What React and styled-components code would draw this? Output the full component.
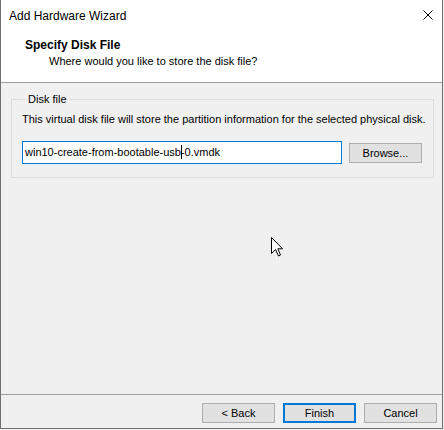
import React from 'react'
import styled, { createGlobalStyle } from 'styled-components'

const GlobalStyle = createGlobalStyle`
    html, body {
        margin: 0;
        padding: 0;
        background: #f0f0f0;
    }
    body {
        font-family: "Liberation Sans", Arial, sans-serif;
        font-size: 11px;
        color: #000;
    }
`

export default function App() {
    return (
        <>
        <GlobalStyle />
        <Window>
            <TitleBar>
                <Title>Add Hardware Wizard</Title>
                <CloseBtn>
                    <svg width="10" height="10" viewBox="0 0 10 10">
                        <path d="M0.5 0.5 L9.5 9.5 M9.5 0.5 L0.5 9.5" stroke="#000" strokeWidth="1" fill="none" />
                    </svg>
                </CloseBtn>
            </TitleBar>
            <Header>
                <HeaderTitle>Specify Disk File</HeaderTitle>
                <HeaderSub>Where would you like to store the disk file?</HeaderSub>
            </Header>
            <Body>
                <GroupBox>
                    <Legend>Disk file</Legend>
                    <Description>This virtual disk file will store the partition information for the selected physical disk.</Description>
                    <FileRow>
                        <FileInput>
                            win10-create-from-bootable-usb<Caret />-0.vmdk
                        </FileInput>
                        <Button>Browse...</Button>
                    </FileRow>
                </GroupBox>
                <Pointer>
                    <svg width="13" height="20" viewBox="0 0 13 20">
                        <path d="M0.5 0.5 L0.5 16.5 L4.5 12.5 L7.5 19 L9.5 18 L6.8 11.8 L11.5 11.8 Z" fill="#fff" stroke="#000" strokeWidth="1" strokeLinejoin="miter" />
                    </svg>
                </Pointer>
            </Body>
            <Footer>
                <Button>&lt; Back</Button>
                <Button focused>Finish</Button>
                <Button>Cancel</Button>
            </Footer>
        </Window>
        </>
    )
}

const Window = styled.div`
    width: 443px;
    height: 429px;
    box-sizing: border-box;
    border: 1px solid #707070;
    border-top: none;
    display: flex;
    flex-direction: column;
    background: #fff;
`

const TitleBar = styled.div`
    height: 31px;
    display: flex;
    align-items: center;
    justify-content: space-between;
    padding-left: 8px;
    padding-right: 8px;
    background: #fff;
`

const Title = styled.span`
    font-size: 12px;
    padding-top: 1px;
`

const CloseBtn = styled.div`
    width: 10px;
    height: 10px;
    margin-right: 1px;
    margin-top: -2px;
    display: flex;
`

const Header = styled.div`
    height: 52px;
    box-sizing: border-box;
    padding: 6px 0 0 24px;
    background: #fff;
    border-bottom: 1px solid #a0a0a0;
`

const HeaderTitle = styled.div`
    font-weight: bold;
    font-size: 12px;
    line-height: 16px;
`

const HeaderSub = styled.div`
    line-height: 16px;
    padding-left: 24px;
`

const Body = styled.div`
    flex: 1;
    position: relative;
    background: #f0f0f0;
    padding: 9px 8px 0 10px;
    border-bottom: 1px solid #a0a0a0;
`

const GroupBox = styled.fieldset`
    margin: 0;
    padding: 5px 11px 13px 10px;
    border: 1px solid #dcdcdc;
    min-width: 0;
`

const Legend = styled.legend`
    padding: 0 2px;
    margin-left: 4px;
    line-height: 14px;
`

const Description = styled.div`
    line-height: 16px;
    white-space: nowrap;
`

const FileRow = styled.div`
    display: flex;
    align-items: center;
    gap: 7px;
    margin-top: 14px;
`

const FileInput = styled.div`
    width: 320px;
    height: 23px;
    box-sizing: border-box;
    border: 1px solid #0078d7;
    background: #fff;
    padding-left: 2px;
    line-height: 21px;
    white-space: nowrap;
`

const Caret = styled.span`
    display: inline-block;
    width: 1px;
    height: 14px;
    margin-right: -1px;
    background: #000;
    vertical-align: -3px;
`

const Button = styled.div`
    width: 73px;
    height: 20px;
    box-sizing: border-box;
    border: ${p => p.focused ? '2px solid #0078d7' : '1px solid #adadad'};
    background: #e1e1e1;
    display: flex;
    align-items: center;
    justify-content: center;
`

const Pointer = styled.div`
    position: absolute;
    left: 270px;
    top: 154px;
    width: 13px;
    height: 20px;
`

const Footer = styled.div`
    height: 33px;
    box-sizing: border-box;
    background: #f0f0f0;
    display: flex;
    justify-content: flex-end;
    gap: 8px;
    padding: 8px 5px 0 0;
`
